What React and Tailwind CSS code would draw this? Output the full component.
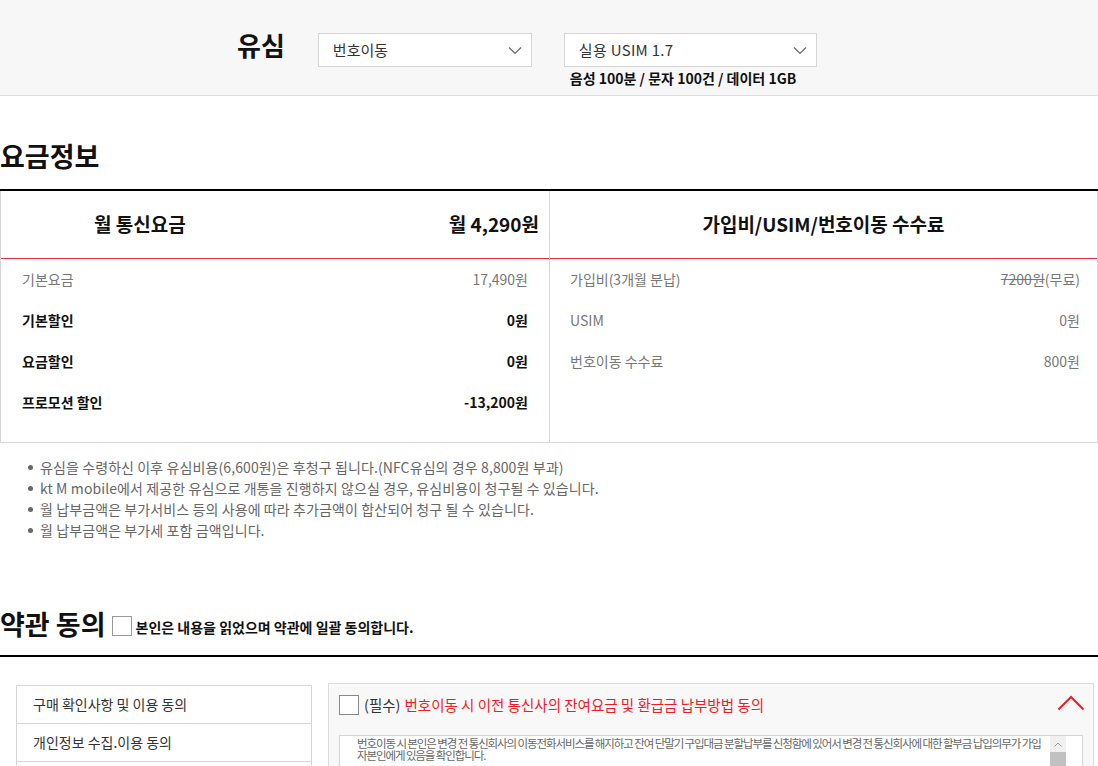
import React from "react";

const Chevron = ({ className = "" }) => (
  <svg width="14" height="9" viewBox="0 0 14 9" className={className}>
    <path d="M1 1.5 L7 7.5 L13 1.5" fill="none" stroke="#666" strokeWidth="1.2" />
  </svg>
);

const Row = ({ label, value, bold }) => (
  <div className="flex h-[41px] items-center justify-between">
    <span className={bold ? "font-bold text-[#111]" : "text-[#777]"}>{label}</span>
    <span className={bold ? "font-bold text-[#111]" : "text-[#777]"}>{value}</span>
  </div>
);

export default function App() {
  return (
    <div
      className="w-[1098px] h-[766px] overflow-hidden bg-white text-[#111]"
      style={{ fontFamily: '"Noto Sans CJK KR", "Noto Sans", sans-serif' }}
    >
      {/* Header */}
      <div className="h-[96px] bg-[#f7f7f7] border-b border-[#dcdcdc]">
        <div className="flex items-start pl-[237px] pt-[33px]">
          <div className="text-[26px] font-bold leading-[30px] mt-[-3px]">유심</div>
          <div className="ml-[33px] flex h-[34px] w-[214px] items-center justify-between border border-[#d5d5d5] bg-white pl-[14px] pr-[9px] text-[15px] text-[#333]">
            <span>번호이동</span>
            <Chevron />
          </div>
          <div className="ml-[32px] flex flex-col">
            <div className="flex h-[34px] w-[253px] items-center justify-between border border-[#d5d5d5] bg-white pl-[14px] pr-[9px] text-[15px] tracking-[0.3px] text-[#333]">
              <span>실용 USIM 1.7</span>
              <Chevron />
            </div>
            <div className="mt-[2px] pl-[6px] text-[14px] font-bold leading-[18px]">
              음성 100분 / 문자 100건 / 데이터 1GB
            </div>
          </div>
        </div>
      </div>

      {/* 요금정보 */}
      <div className="mt-[44px] text-[27px] font-bold leading-[32px]">요금정보</div>
      <div className="mt-[17px] border-t-2 border-black">
        <div className="grid grid-cols-[550px_548px] border-b border-[#d5d5d5]">
          <div className="border-l border-r border-[#d5d5d5]">
            <div className="flex h-[68px] items-center justify-between border-b border-[#e0313c] pl-[93px] pr-[10px] text-[19px] font-bold">
              <span>월 통신요금</span>
              <span>월 4,290원</span>
            </div>
            <div className="px-[21px] pb-[19px] text-[14px]">
              <Row label="기본요금" value="17,490원" />
              <Row label="기본할인" value="0원" bold />
              <Row label="요금할인" value="0원" bold />
              <Row label="프로모션 할인" value="-13,200원" bold />
            </div>
          </div>
          <div className="border-r border-[#d5d5d5]">
            <div className="flex h-[68px] items-center justify-center border-b border-[#e0313c] text-[19px] font-bold">
              가입비/USIM/번호이동 수수료
            </div>
            <div className="pl-[20px] pr-[17px] text-[14px]">
              <div className="flex h-[41px] items-center justify-between text-[#777]">
                <span>가입비(3개월 분납)</span>
                <span>
                  <span className="line-through">7200원</span>(무료)
                </span>
              </div>
              <Row label="USIM" value="0원" />
              <Row label="번호이동 수수료" value="800원" />
            </div>
          </div>
        </div>
      </div>

      {/* notes */}
      <ul className="mt-[14px] pl-[28px] text-[14px] tracking-[0.1px] leading-[21px] text-[#666]">
        {[
          "유심을 수령하신 이후 유심비용(6,600원)은 후청구 됩니다.(NFC유심의 경우 8,800원 부과)",
          "kt M mobile에서 제공한 유심으로 개통을 진행하지 않으실 경우, 유심비용이 청구될 수 있습니다.",
          "월 납부금액은 부가서비스 등의 사용에 따라 추가금액이 합산되어 청구 될 수 있습니다.",
          "월 납부금액은 부가세 포함 금액입니다.",
        ].map((t) => (
          <li key={t} className="flex items-center">
            <span className="mr-[7px] inline-block h-[5px] w-[5px] rounded-full bg-[#666]" />
            {t}
          </li>
        ))}
      </ul>

      {/* 약관 동의 */}
      <div className="mt-[67px] flex items-center">
        <span className="text-[27px] font-bold leading-[32px]">약관 동의</span>
        <span className="ml-[6px] mt-[4px] inline-block h-[20px] w-[20px] border border-[#999] bg-white" />
        <span className="ml-[4px] mt-[6px] text-[14px] font-bold">
          본인은 내용을 읽었으며 약관에 일괄 동의합니다.
        </span>
      </div>
      <div className="mt-[15px] border-t-2 border-black" />

      <div className="mt-[26px] flex items-start">
        <div className="ml-[16px] mt-[2px] w-[296px] border border-[#d5d5d5] text-[14px] text-[#333]">
          <div className="flex h-[38px] items-center border-b border-[#d5d5d5] pl-[16px]">구매 확인사항 및 이용 동의</div>
          <div className="flex h-[38px] items-center border-b border-[#d5d5d5] pl-[16px]">개인정보 수집.이용 동의</div>
          <div className="h-[38px]" />
        </div>
        <div className="ml-[16px] w-[766px] border border-[#dcdcdc] bg-[#f8f8f8] pl-[10px] pr-[10px]">
          <div className="flex h-[42px] items-center justify-between">
            <div className="flex items-center text-[14.5px]">
              <span className="inline-block h-[20px] w-[20px] border border-[#888] bg-white" />
              <span className="ml-[5px] text-[#333]">(필수)</span>
              <span className="ml-[4px] text-[#ee1c25]">번호이동 시 이전 통신사의 잔여요금 및 환급금 납부방법 동의</span>
            </div>
            <svg width="28" height="16" viewBox="0 0 28 16" className="mr-[-2px] mb-[4px]">
              <path d="M1.5 14.5 L14 2 L26.5 14.5" fill="none" stroke="#ee1c25" strokeWidth="2" />
            </svg>
          </div>
          <div className="mt-[9px] flex h-[40px] border border-[#d5d5d5] bg-white">
            <div className="flex-1 pl-[17px] pr-[2px] pt-[1px] text-[11.5px] leading-[12px] text-[#666] tracking-[-1.1px]">
              번호이동 시 본인은 변경 전 통신회사의 이동전화서비스를 해지하고 잔여 단말기 구입대금 분할납부를 신청함에 있어서 변경 전 통신회사에 대한 할부금 납입의무가 가입
              <br />
              자본인에게 있음을 확인합니다.
            </div>
            <div className="mr-[16px] flex w-[16px] flex-col">
              <div className="flex h-[16px] items-center justify-center bg-[#f0f0f0]">
                <svg width="8" height="5" viewBox="0 0 8 5">
                  <path d="M0.5 4.5 L4 1 L7.5 4.5" fill="none" stroke="#999" strokeWidth="1" />
                </svg>
              </div>
              <div className="flex-1 bg-[#c1c1c1]" />
            </div>
          </div>
        </div>
      </div>
    </div>
  );
}
